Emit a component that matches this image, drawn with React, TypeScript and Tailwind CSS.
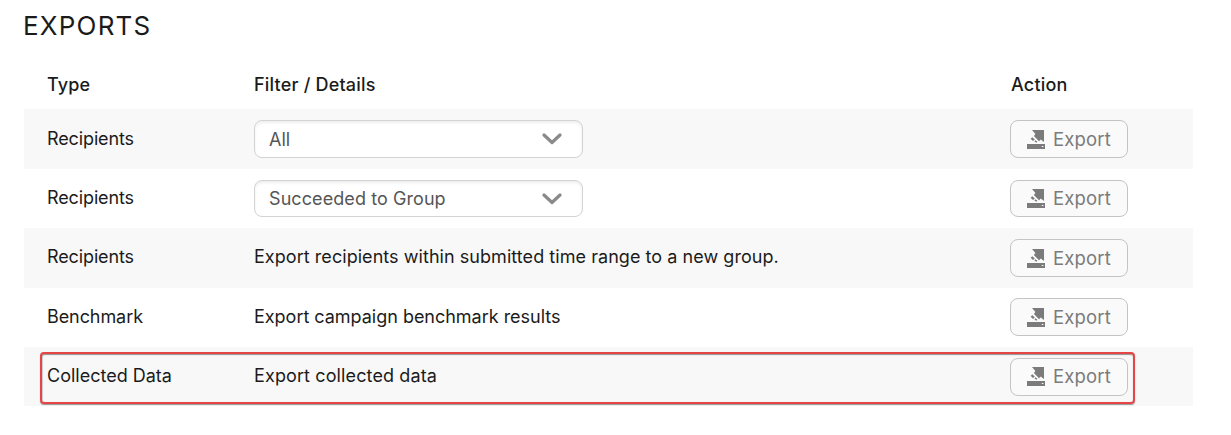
import React from "react";

function ExportIcon() {
  return (
    <svg width="18" height="19" viewBox="0 0 18 19" fill="#7b7b7b" aria-hidden="true">
      <path d="M5 0H17V12L13.8 9.4L12 11.2L6.9 6.1L8.4 4Z" />
      <path d="M5.4 7.2L7.8 9.6L6 11L3.6 8.8ZM8.4 10.2L10.4 11.8L9.4 12.8L7.4 11.4Z" />
      <path fillRule="evenodd" d="M0 14H18V19H0ZM14.8 16V17H16.4V16Z" />
    </svg>
  );
}

function ExportButton({ className = "h-[38px]" }: { className?: string }) {
  return (
    <button className={`flex w-[118px] items-center gap-2 rounded-[8px] border border-[#c4c4c4] bg-[#fafafa] pl-4 text-[18.5px] text-[#7b7b7b] ${className}`}>
      <ExportIcon />
      <span className="pt-px tracking-[0.15px]">Export</span>
    </button>
  );
}

function Select({ children, className = "h-[38px]" }: { children: React.ReactNode; className?: string }) {
  return (
    <button className={`flex w-[329px] items-center justify-between rounded-[8px] border border-[#d3d3d3] bg-white pr-5 pl-3.5 text-[#555] shadow-[inset_0_2px_3px_rgba(0,0,0,0.07)] ${className}`}>
      {children}
      <svg width="20" height="12" viewBox="0 0 20 12" fill="none" stroke="#8a8a8a" strokeWidth="3.2" strokeLinecap="round" strokeLinejoin="round" aria-hidden="true">
        <path d="M2 2L10 9.5L18 2" />
      </svg>
    </button>
  );
}

const grid = "grid grid-cols-[207px_756px_1fr] items-center pl-[23px]";

function Row({ type, details, className, button }: { type: React.ReactNode; details: React.ReactNode; className: string; button?: string }) {
  return (
    <div className={`${grid} ${className}`}>
      <div className="pb-0.5">{type}</div>
      <div>{details}</div>
      <ExportButton className={button} />
    </div>
  );
}

export default function App() {
  return (
    <main className="h-[435px] w-[1231px] overflow-hidden bg-white pl-6 font-['Inter','Liberation_Sans',sans-serif] text-[18px] font-normal text-[#1b1b1b]">
      <h1 className="-ml-px flex h-[61px] items-center pb-[10px] text-[26px]">
        <span className="tracking-[1.2px]">EXPORTS</span>
      </h1>
      <section className="relative w-[1169px]">
        <div className={`${grid} h-12 pb-0.5 font-[450]`}>
          <div><span className="tracking-[0.1px]">Type</span></div>
          <div><span className="tracking-[0.2px]">Filter / Details</span></div>
          <div className="pl-px"><span className="tracking-[0.2px]">Action</span></div>
        </div>
        <Row className="h-[60px] bg-[#f8f8f8]" type={<span className="tracking-[-0.12px]">Recipients</span>} details={<Select><span>All</span></Select>} />
        <Row className="h-[59px]" button="h-[37px]" type={<span className="tracking-[-0.12px]">Recipients</span>} details={<Select className="h-[37px]"><span className="pb-px tracking-[0.08px]">Succeeded to Group</span></Select>} />
        <Row className="h-[60px] bg-[#f8f8f8]" type={<div className="pb-px tracking-[-0.12px]">Recipients</div>} details={<div className="pb-[3px] tracking-[0.05px]">Export recipients within submitted time range to a new group.</div>} />
        <Row className="h-[59px] pb-px" type={<div className="tracking-[-0.08px]">Benchmark</div>} details={<div className="pb-px tracking-[-0.02px]">Export campaign benchmark results</div>} />
        <Row className="h-[59px] bg-[#f8f8f8]" type={<span>Collected Data</span>} details={<div className="pb-0.5 tracking-[0.12px]">Export collected data</div>} />
        <div className="pointer-events-none absolute bottom-[2px] left-4 h-[52px] w-[1095px] rounded-[4px] border-2 border-[#e64545] shadow-[0_1px_1px_rgba(0,0,0,0.4),inset_0_1px_1px_rgba(0,0,0,0.4),inset_1px_0_1px_rgba(0,0,0,0.15)]" />
      </section>
    </main>
  );
}
